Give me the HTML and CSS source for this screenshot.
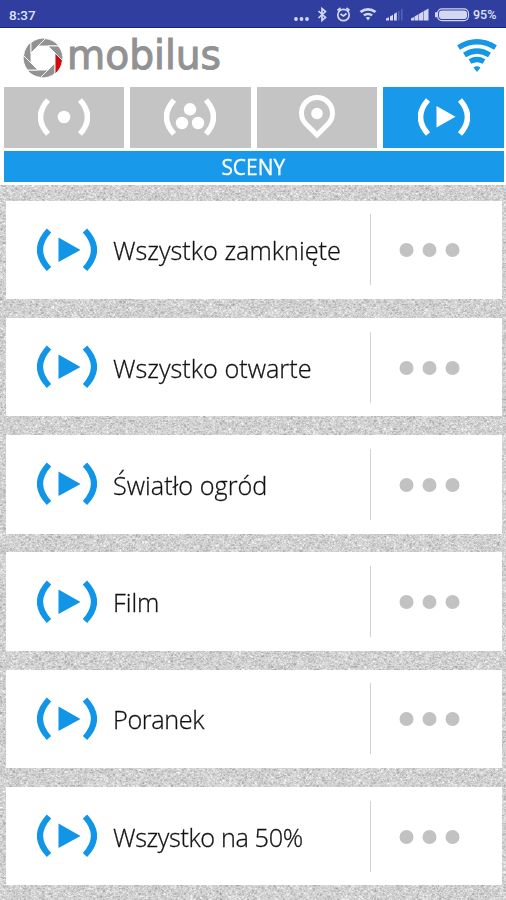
FILE: index.html
```html
<!DOCTYPE html>
<html lang="pl">
<head>
<meta charset="utf-8">
<title>Mobilus</title>
<link rel="stylesheet" href="styles.css">
</head>
<body>
<svg class="defs" width="0" height="0">
  <symbol id="scene" viewBox="0 0 60 44">
    <path d="M12 2.500Q-6 22 12 41M48 2.500Q66 22 48 41" fill="none" stroke="currentColor" stroke-width="6"/>
    <path d="M21.500 9.500L43.500 22L21.500 34Z" fill="currentColor"/>
  </symbol>
  <symbol id="dots" viewBox="0 0 60 14">
    <g fill="currentColor"><circle cx="7" cy="7" r="7"/><circle cx="30" cy="7" r="7"/><circle cx="53" cy="7" r="7"/></g>
  </symbol>
  <path id="blade" d="M12 -5L19.400 2.400A20 20 0 0 1 12 16Z"/>
</svg>
<header class="status">
  <span class="clock">8:37</span>
  <svg class="indicators" viewBox="0 0 206 28">
    <g fill="#d3d7f2">
      <circle cx="4" cy="19" r="1.900"/><circle cx="9.500" cy="19" r="1.900"/><circle cx="15" cy="19" r="1.900"/>
      <path d="M67.500 11Q76 5 84.500 11L82.500 13Q76 8.500 69.500 13ZM71 14.500Q76 10.800 81 14.500L79.300 16.300Q76 14 72.700 16.300ZM73.700 17.600Q76 16.200 78.300 17.600L76 20.500Z"/>
      <path d="M94 20.500V18.500L97 17.200V20.500ZM98 20.500V16.500L101 14.800V20.500ZM102 20.500V14L104.800 12.300V20.500Z"/>
      <path d="M119 20.500V18.500L122 16.900V20.500ZM122.500 20.500V16.600L126 14.500V20.500ZM126.500 20.500V14.200L131 11.500V20.500ZM131.500 20.500V11.200L136.500 8.500V20.500Z"/>
      <rect x="147" y="10.500" width="28" height="8.500" rx="3"/>
      <rect x="143" y="12" width="2" height="5.500" rx="1"/>
    </g>
    <path d="M106 20.500V11.500L107.500 10.500V20.500ZM109 20.500V9.500L110.500 8.500V20.500Z" fill="#5964b5"/>
    <g fill="none" stroke="#d3d7f2" stroke-width="1.700">
      <path d="M26.500 11L33.500 17.500L30 20.500V8.500L33.500 11.500L26.500 18"/>
      <circle cx="51.500" cy="15" r="5.700"/><path d="M48.500 14L51.500 16L54.500 13.500M45.500 10.500L48.500 8M57.500 10.500L54.500 8"/>
      <rect x="145.500" y="8.900" width="31" height="11.700" rx="4.500" stroke-width="1.200"/>
    </g>
  </svg>
  <span class="percent">95%</span>
</header>
<div class="brand">
  <svg class="logo" viewBox="0 0 204 44" role="img" aria-label="mobilus">
    <g transform="translate(21 22)" fill="#929292" stroke="#fff" stroke-width=".9">
      <use href="#blade" transform="rotate(45)"/>
      <use href="#blade" transform="rotate(90)"/>
      <use href="#blade" transform="rotate(135)"/>
      <use href="#blade" transform="rotate(180)"/>
      <use href="#blade" transform="rotate(225)"/>
      <use href="#blade" transform="rotate(270)"/>
      <use href="#blade" transform="rotate(315)"/>
      <use href="#blade" fill="#d00b0f"/>
    </g>
    <text class="wordmark" x="45" y="33" textLength="154" lengthAdjust="spacingAndGlyphs">mobilus</text>
  </svg>
  <svg class="wifi" viewBox="0 0 42 34">
    <path d="M2.500 8.500Q21 -3 39.500 8.500M8.500 16Q21 8 33.500 16M14 22.500Q21 18.500 28 22.500" fill="none" stroke="#1597e5" stroke-width="5.200"/>
    <path d="M17.500 28.500Q21 26 24.500 28.500L21 33Z" fill="#1597e5"/>
  </svg>
</div>
<nav class="tabs">
  <div class="tab"><svg viewBox="0 0 52 40"><path d="M10 3Q-5 20 10 37M42 3Q57 20 42 37" fill="none" stroke="#fff" stroke-width="5.400"/><circle cx="26" cy="20" r="6.300" fill="#fff"/></svg></div>
  <div class="tab"><svg viewBox="0 0 52 40"><path d="M10 3Q-5 20 10 37M42 3Q57 20 42 37" fill="none" stroke="#fff" stroke-width="5.400"/><g fill="#fff"><circle cx="26" cy="12.300" r="6.200"/><circle cx="18" cy="26" r="6.200"/><circle cx="34" cy="26" r="6.200"/></g></svg></div>
  <div class="tab"><svg class="pin" viewBox="0 0 38 46"><path d="M19 41L8 30A15.500 15.500 0 1 1 30 30Z" fill="none" stroke="#fff" stroke-width="5"/><circle cx="19" cy="19.500" r="5.800" fill="#fff"/></svg></div>
  <div class="tab active"><svg viewBox="0 0 52 40"><path d="M10 3Q-5 20 10 37M42 3Q57 20 42 37" fill="none" stroke="#fff" stroke-width="5.400"/><path d="M18.500 9L37.500 19.700L18.500 30.500Z" fill="#fff"/></svg></div>
</nav>
<h1 class="title"><span>SCENY</span></h1>
<main class="scenes">
  <svg class="concrete" width="506" height="716">
    <filter id="grain" x="0" y="0" width="100%" height="100%" color-interpolation-filters="sRGB">
      <feTurbulence type="turbulence" baseFrequency="0.31 0.37" numOctaves="3" seed="8"/>
      <feColorMatrix values="-0.3 0.25 0 0 0.835  -0.3 0.25 0 0 0.835  -0.3 0.25 0 0 0.835  0 0 0 0 1"/>
    </filter>
    <rect width="506" height="716" filter="url(#grain)"/>
  </svg>
  <div class="card"><svg class="play"><use href="#scene"/></svg><span class="name">Wszystko zamknięte</span><div class="more"><svg><use href="#dots"/></svg></div></div>
  <div class="card"><svg class="play"><use href="#scene"/></svg><span class="name">Wszystko otwarte</span><div class="more"><svg><use href="#dots"/></svg></div></div>
  <div class="card"><svg class="play"><use href="#scene"/></svg><span class="name">Światło ogród</span><div class="more"><svg><use href="#dots"/></svg></div></div>
  <div class="card"><svg class="play"><use href="#scene"/></svg><span class="name">Film</span><div class="more"><svg><use href="#dots"/></svg></div></div>
  <div class="card"><svg class="play"><use href="#scene"/></svg><span class="name tight">Poranek</span><div class="more"><svg><use href="#dots"/></svg></div></div>
  <div class="card"><svg class="play"><use href="#scene"/></svg><span class="name tight">Wszystko na 50%</span><div class="more"><svg><use href="#dots"/></svg></div></div>
</main>
</body>
</html>
```
FILE: styles.css
```css
* { box-sizing: border-box; }
body {
  margin: 0;
  width: 506px;
  height: 900px;
  overflow: hidden;
  background: #fff;
  font-family: "Open Sans", "Noto Sans", sans-serif;
}
svg { display: block; }
.defs { position: absolute; }
.status {
  display: flex;
  align-items: center;
  height: 28px;
  padding: 2px 8px 0 9px;
  background: #303e9f;
  border-bottom: 1px solid #16248a;
  color: #dfe2f7;
  font: 500 13px Roboto, sans-serif;
}
.clock { flex: 1; font-size: 13.5px; }
.indicators { width: 206px; height: 28px; margin: -2px -25px 0 0; }
.percent { width: 25px; font-size: 12.5px; }
.brand {
  display: flex;
  justify-content: space-between;
  height: 58.500px;
  padding: 7.500px 8px 0 22px;
}
.logo { width: 204px; height: 44px; overflow: visible; }
.wordmark { font: 40px "DejaVu Sans", sans-serif; fill: #929292; stroke: #929292; stroke-width: 1.1px; }
.wifi { width: 42px; height: 34px; margin-top: 3px; }
.tabs {
  display: grid;
  grid-template-columns: repeat(4, 1fr);
  gap: 6px;
  height: 61.500px;
  padding: 0 2px 0 3.500px;
}
.tab { display: grid; place-items: center; background: #c4c4c4; }
.tab svg { width: 52px; height: 40px; }
.tab .pin { width: 38px; height: 46px; }
.tab.active { background: #1899ea; }
.title {
  height: 30.500px;
  margin: 3px 2px 3px 3.500px;
  background: #1899ea;
  color: #fff;
  font-size: 22.5px;
  font-weight: 400;
  line-height: 32px;
  text-align: center;
}
.title span { display: inline-block; transform: scaleX(.93); -webkit-text-stroke: .3px #fff; }
.scenes {
  position: relative;
  display: flex;
  flex-direction: column;
  gap: 18.800px;
  height: 716px;
  padding: 16px 4.500px 0 5.500px;
  background: #d3d3d3;
}
.concrete { position: absolute; left: 0; top: 0; }
.card {
  position: relative;
  display: flex;
  flex: none;
  align-items: center;
  height: 98.500px;
  padding-left: 31.500px;
  background: #fff;
}
.play { width: 60px; height: 44px; color: #1196e7; }
.name {
  flex: 1;
  margin: 1px 0 0 16px;
  color: #111;
  font-size: 26px;
  font-weight: 300;
  line-height: 36px;
  white-space: nowrap;
  transform: scaleX(.972);
  transform-origin: left;
  -webkit-text-stroke: .3px #111;
}
.name.tight { letter-spacing: -.4px; }
.more {
  width: 131.500px;
  height: 71px;
  padding: 29px 0 0 27.500px;
  border-left: 1px solid #d2d2d2;
  color: #c2c2c2;
}
.more svg { width: 61px; height: 14px; }
```
